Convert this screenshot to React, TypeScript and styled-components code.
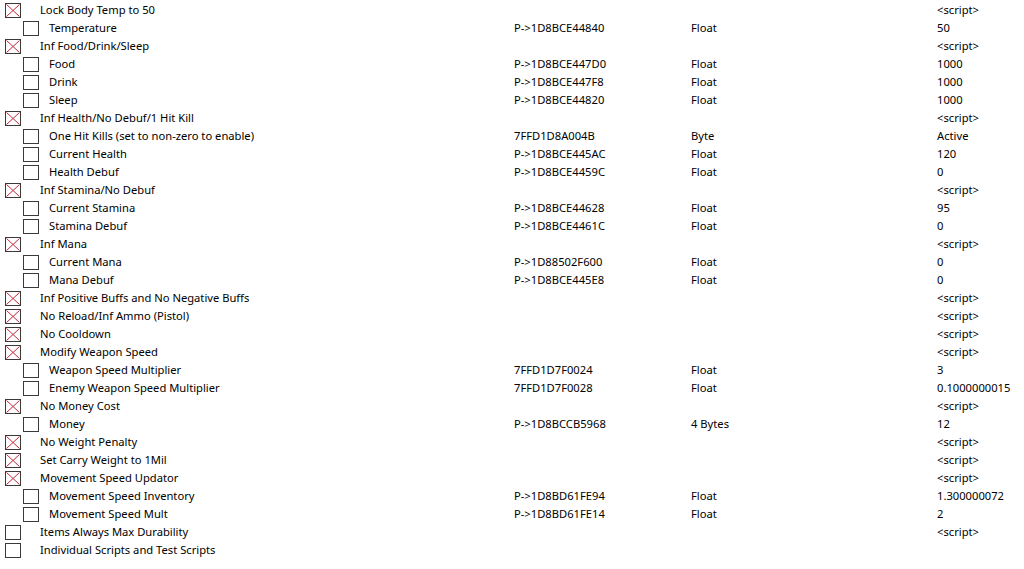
import React from "react";
import styled, { createGlobalStyle } from "styled-components";

const Global = createGlobalStyle`
  html, body { margin: 0; padding: 0; background: #ffffff; }
  body { font-family: "Noto Sans", "Open Sans", sans-serif; font-size: 11.2px; color: #000; }
`;

type Entry = {
  name: string;
  child?: boolean;
  active?: boolean;
  address?: string;
  type?: string;
  value: string;
};

const entries: Entry[] = [
  { name: "Lock Body Temp to 50", active: true, value: "<script>" },
  { name: "Temperature", child: true, address: "P->1D8BCE44840", type: "Float", value: "50" },
  { name: "Inf Food/Drink/Sleep", active: true, value: "<script>" },
  { name: "Food", child: true, address: "P->1D8BCE447D0", type: "Float", value: "1000" },
  { name: "Drink", child: true, address: "P->1D8BCE447F8", type: "Float", value: "1000" },
  { name: "Sleep", child: true, address: "P->1D8BCE44820", type: "Float", value: "1000" },
  { name: "Inf Health/No Debuf/1 Hit Kill", active: true, value: "<script>" },
  { name: "One Hit Kills (set to non-zero to enable)", child: true, address: "7FFD1D8A004B", type: "Byte", value: "Active" },
  { name: "Current Health", child: true, address: "P->1D8BCE445AC", type: "Float", value: "120" },
  { name: "Health Debuf", child: true, address: "P->1D8BCE4459C", type: "Float", value: "0" },
  { name: "Inf Stamina/No Debuf", active: true, value: "<script>" },
  { name: "Current Stamina", child: true, address: "P->1D8BCE44628", type: "Float", value: "95" },
  { name: "Stamina Debuf", child: true, address: "P->1D8BCE4461C", type: "Float", value: "0" },
  { name: "Inf Mana", active: true, value: "<script>" },
  { name: "Current Mana", child: true, address: "P->1D88502F600", type: "Float", value: "0" },
  { name: "Mana Debuf", child: true, address: "P->1D8BCE445E8", type: "Float", value: "0" },
  { name: "Inf Positive Buffs and No Negative Buffs", active: true, value: "<script>" },
  { name: "No Reload/Inf Ammo (Pistol)", active: true, value: "<script>" },
  { name: "No Cooldown", active: true, value: "<script>" },
  { name: "Modify Weapon Speed", active: true, value: "<script>" },
  { name: "Weapon Speed Multiplier", child: true, address: "7FFD1D7F0024", type: "Float", value: "3" },
  { name: "Enemy Weapon Speed Multiplier", child: true, address: "7FFD1D7F0028", type: "Float", value: "0.1000000015" },
  { name: "No Money Cost", active: true, value: "<script>" },
  { name: "Money", child: true, address: "P->1D8BCCB5968", type: "4 Bytes", value: "12" },
  { name: "No Weight Penalty", active: true, value: "<script>" },
  { name: "Set Carry Weight to 1Mil", active: true, value: "<script>" },
  { name: "Movement Speed Updator", active: true, value: "<script>" },
  { name: "Movement Speed Inventory", child: true, address: "P->1D8BD61FE94", type: "Float", value: "1.300000072" },
  { name: "Movement Speed Mult", child: true, address: "P->1D8BD61FE14", type: "Float", value: "2" },
  { name: "Items Always Max Durability", value: "<script>" },
  { name: "Individual Scripts and Test Scripts", value: "" },
];

const Table = styled.div`
  display: flex;
  flex-direction: column;
  padding-top: 1px;
  width: 1024px;
`;

const Row = styled.div`
  display: grid;
  grid-template-columns: 514px 177px 246px 1fr;
  height: 18px;
  align-items: center;
  white-space: nowrap;
`;

const Tree = styled.div<{ $child?: boolean }>`
  display: flex;
  align-items: center;
  padding-left: ${(p) => (p.$child ? 23 : 5)}px;
`;

const Box = styled.span<{ $child?: boolean }>`
  position: relative;
  box-sizing: border-box;
  width: 16px;
  height: 15px;
  border: 1px solid #3a3a3a;
  background: #fff;
  flex: none;
  margin-right: ${(p) => (p.$child ? 10 : 19)}px;
`;

const Cross = styled.svg`
  position: absolute;
  inset: 0;
  width: 100%;
  height: 100%;
`;

const Label = styled.span`
  line-height: 16px;
`;

const Cell = styled.span`
  line-height: 16px;
`;

function Check({ child, active }: { child?: boolean; active?: boolean }) {
  return (
    <Box $child={child}>
      {active && (
        <Cross viewBox="0 0 14 13" preserveAspectRatio="none">
          <line x1="0.5" y1="0.5" x2="13.5" y2="12.5" stroke="#c8243c" strokeWidth="1" />
          <line x1="13.5" y1="0.5" x2="0.5" y2="12.5" stroke="#c8243c" strokeWidth="1" />
        </Cross>
      )}
    </Box>
  );
}

export default function App() {
  return (
    <>
      <Global />
      <Table>
        {entries.map((e, i) => (
          <Row key={i}>
            <Tree $child={e.child}>
              <Check child={e.child} active={e.active} />
              <Label>{e.name}</Label>
            </Tree>
            <Cell>{e.address ?? ""}</Cell>
            <Cell>{e.type ?? ""}</Cell>
            <Cell>{e.value}</Cell>
          </Row>
        ))}
      </Table>
    </>
  );
}
